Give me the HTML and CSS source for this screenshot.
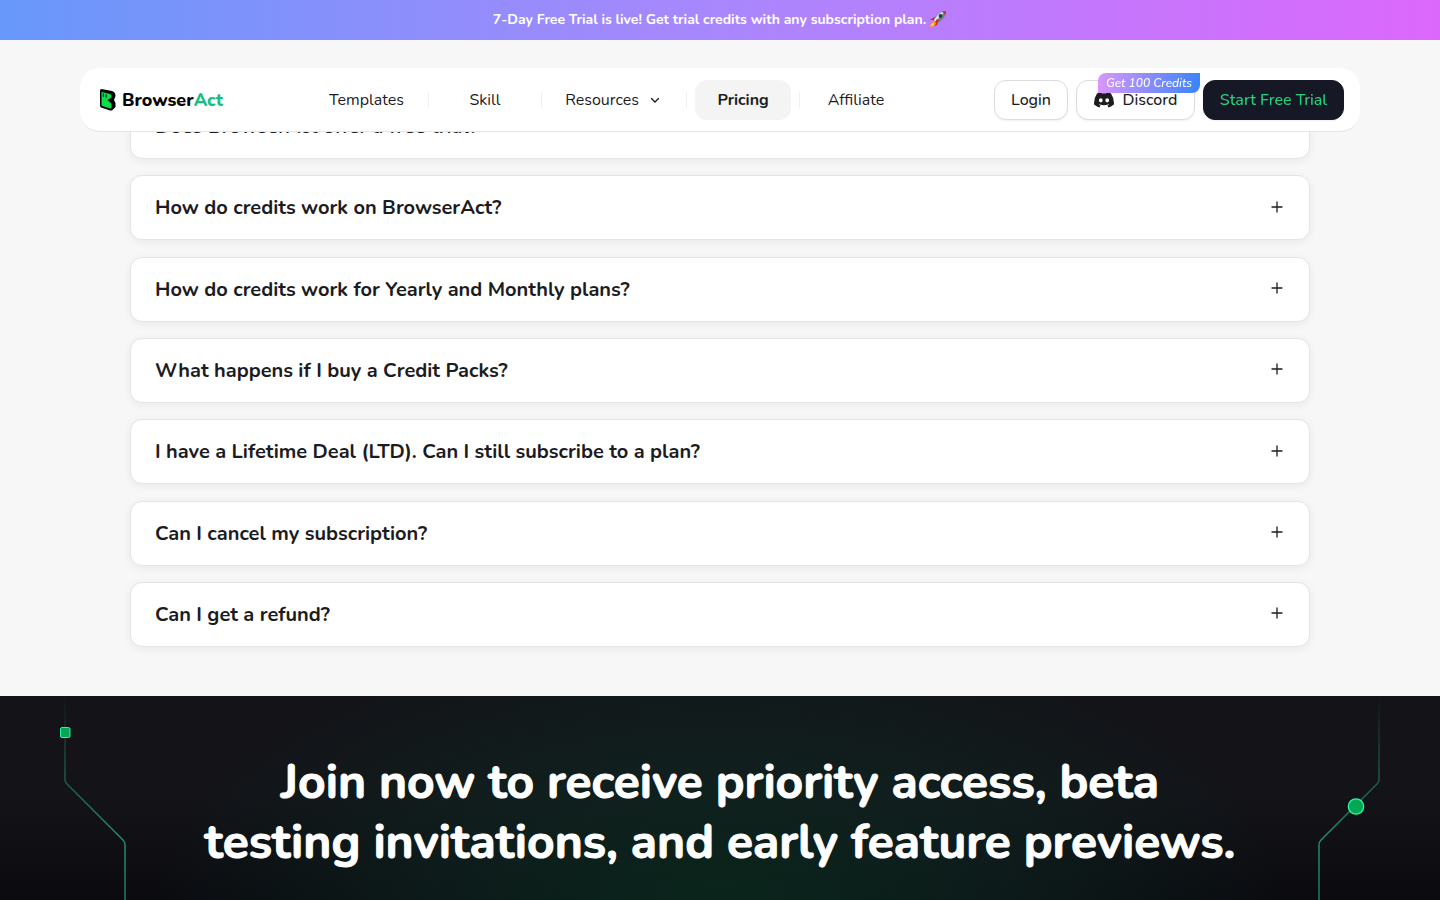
FILE: index.html
```html
<!DOCTYPE html>
<html lang="en">
<head>
<meta charset="utf-8">
<title>BrowserAct Pricing</title>
<link rel="stylesheet" href="styles.css">
</head>
<body>
<a class="banner" href="#trial"><span>7-Day Free Trial is live! Get trial credits with any subscription plan.</span>
<svg class="rocket" viewBox="0 0 18 18" aria-hidden="true"><path d="M4 8 8 6 10 10 8 15 6 16 7 12 4 10 1 10Z" fill="#c9252d"/><path d="M4.500 10.500C7 5 11 1 17 1C17 7 12 12 7.500 13.500Z" fill="#6f8490"/><path d="M5 10C8 5 11 2 16 1.500L6 12Z" fill="#d9e3e8"/><path d="M13 1.500Q15 1 17 1Q17 3 16.500 5Z" fill="#d62631"/><circle cx="11.500" cy="6" r="1.900" fill="#253b50"/><path d="M8 9 10 10 7 15 6 12Z" fill="#d62631"/><path d="M5 11 7 13Q5 17 1 17Q1 13 5 11Z" fill="#ff9d19"/><path d="M4 13 5 14Q4 16 2 16Q2 14 4 13Z" fill="#ffe455"/></svg></a>
<header class="header">
  <a class="logo" href="#home" aria-label="BrowserAct">
    <svg class="logo-mark" viewBox="0 0 16 22" aria-hidden="true"><path d="M1.500 0 12 2Q15.500 3 15.500 7L14 11 15.500 14V18L12 21.500 10 21.500 1 18.500Q0 18 0 16.500V1.500Q0 0 1.500 0Z" fill="#050505"/><path d="M1.500 3 9.500 4.700Q11.500 5.200 11.500 7V8.500L7.500 11 11.500 14.500V18Q11.500 20 10 19.500L2.500 17Q1.500 16.500 1.500 15.500Z" fill="#0bdc4b"/><path d="M3.400 5v2.500M6.100 5.700v2.500" stroke="#050505" stroke-width="1"/></svg>
    <span class="wordmark">Browser<span class="accent">Act</span></span>
  </a>
  <nav class="nav" aria-label="Main">
    <a class="templates" href="#templates">Templates</a>
    <a class="skill" href="#skill">Skill</a>
    <button class="resources" type="button">Resources <svg viewBox="0 0 16 16" aria-hidden="true"><path d="m4.500 6.500 3.500 3.500 3.500-3.500"/></svg></button>
    <a class="pricing" href="#pricing" aria-current="page"><span>Pricing</span></a>
    <a class="affiliate" href="#affiliate">Affiliate</a>
  </nav>
  <div class="actions">
    <button class="btn login" type="button">Login</button>
    <button class="btn discord" type="button"><svg viewBox="0 0 20 16" aria-hidden="true"><path fill="#1c1c1f" fill-rule="evenodd" d="M7.300 0Q5 .4 3 1.400Q-.4 6.500.1 12.600Q2.500 14.600 5.400 15.500L6.600 13.500 5 12.700 5.400 12.300Q10 14.200 14.600 12.300L15 12.700 13.400 13.500 14.600 15.500Q17.500 14.600 19.900 12.600Q20.400 6.500 17 1.400Q15 .4 12.700 0L12 1.400Q10 1.100 8 1.400ZM6.800 6.200A1.900 2.100 0 1 1 6.800 10.400A1.900 2.100 0 1 1 6.800 6.200ZM13.200 6.200A1.900 2.100 0 1 1 13.200 10.400A1.900 2.100 0 1 1 13.200 6.200Z"/></svg>Discord<span class="badge">Get 100 Credits</span></button>
    <button class="btn trial" type="button">Start Free Trial</button>
  </div>
</header>
<main>
  <section class="faq" aria-label="Frequently asked questions">
    <button class="question" type="button">Does BrowserAct offer a free trial?<svg viewBox="0 0 12 12" aria-hidden="true"><path d="M6 1v10M1 6h10"/></svg></button>
    <button class="question" type="button">How do credits work on BrowserAct?<svg viewBox="0 0 12 12" aria-hidden="true"><path d="M6 1v10M1 6h10"/></svg></button>
    <button class="question" type="button">How do credits work for Yearly and Monthly plans?<svg viewBox="0 0 12 12" aria-hidden="true"><path d="M6 1v10M1 6h10"/></svg></button>
    <button class="question" type="button">What happens if I buy a Credit Packs?<svg viewBox="0 0 12 12" aria-hidden="true"><path d="M6 1v10M1 6h10"/></svg></button>
    <button class="question" type="button">I have a Lifetime Deal (LTD). Can I still subscribe to a plan?<svg viewBox="0 0 12 12" aria-hidden="true"><path d="M6 1v10M1 6h10"/></svg></button>
    <button class="question" type="button">Can I cancel my subscription?<svg viewBox="0 0 12 12" aria-hidden="true"><path d="M6 1v10M1 6h10"/></svg></button>
    <button class="question" type="button">Can I get a refund?<svg viewBox="0 0 12 12" aria-hidden="true"><path d="M6 1v10M1 6h10"/></svg></button>
  </section>
  <section class="join">
    <svg class="circuit left" viewBox="0 0 70 204" aria-hidden="true"><defs><linearGradient id="fade" gradientUnits="userSpaceOnUse" x1="0" y1="0" x2="0" y2="204"><stop offset="0" stop-color="#25b987" stop-opacity="0"/><stop offset=".7" stop-color="#25b987" stop-opacity=".75"/><stop offset="1" stop-color="#25b987" stop-opacity=".65"/></linearGradient></defs><path d="M5 0V84Q5 86 7 88L63 144Q65 146 65 149V204" fill="none" stroke="url(#fade)" stroke-width="1.500"/><rect x=".5" y="31.500" width="9.500" height="10" rx="1.500" fill="#05a755" stroke="#2ff3aa"/></svg>
    <h2>Join now to receive priority access, beta<br>testing invitations, and early feature previews.</h2>
    <svg class="circuit right" viewBox="0 0 70 204" aria-hidden="true"><path d="M69 0V84Q69 86 67 88L11 144Q9 146 9 149V204" fill="none" stroke="url(#fade)" stroke-width="1.500"/><circle cx="46" cy="110.500" r="7.700" fill="#05a755" stroke="#2ff3aa" stroke-width="1.300"/></svg>
  </section>
</main>
</body>
</html>
```
FILE: styles.css
```css
* { box-sizing: border-box; }
body {
  margin: 0;
  min-height: 100vh;
  display: flex;
  flex-direction: column;
  background: #f7f7f7;
  color: #1c1c1f;
  font-family: Nunito, Lato, "Noto Sans", sans-serif;
  font-size: 16px;
}
a { color: inherit; text-decoration: none; }
button { font: inherit; color: inherit; cursor: pointer; }
.banner {
  display: flex;
  align-items: center;
  justify-content: center;
  gap: 3px;
  height: 40px;
  padding-bottom: 2px;
  background: linear-gradient(90deg, #6898fa, #a987fd 50%, #dc68fb);
  color: #fff;
  font-size: 14px;
  font-weight: 700;
}
.rocket { width: 18px; height: 18px; }
.header {
  position: fixed;
  z-index: 2;
  top: 68px;
  left: 80px;
  right: 80px;
  height: 64px;
  padding: 0 16px 0 20px;
  display: flex;
  align-items: center;
  justify-content: space-between;
  background: #fff;
  border-bottom: 1px solid #e6e6e6;
  border-radius: 20px;
}
.logo { display: flex; align-items: center; gap: 6px; }
.logo-mark { width: 16px; height: 22px; }
.wordmark { font-size: 18px; font-weight: 800; color: #050505; }
.accent { color: #17bf83; }
.nav { display: flex; align-items: center; height: 40px; }
.nav > * {
  display: flex;
  align-items: center;
  justify-content: center;
  height: 16px;
  padding: 0;
  background: none;
  border: 0;
  border-right: 1px solid #f0f0f0;
}
.nav .templates { width: 124px; }
.nav .skill { width: 113px; }
.nav .resources { width: 145px; gap: 8px; }
.nav .resources svg { width: 16px; height: 16px; }
.nav .pricing { width: 113px; font-weight: 700; }
.nav .pricing span {
  padding: 0 22px;
  line-height: 40px;
  background: #f4f4f4;
  border-radius: 12px;
}
.nav .affiliate { width: 112px; border: 0; }
svg path { stroke-linecap: round; }
.resources path, .question path { fill: none; stroke: #1c1c1f; stroke-width: 1.3; }
.actions { display: flex; gap: 8px; }
.btn {
  position: relative;
  display: flex;
  align-items: center;
  justify-content: center;
  gap: 9px;
  height: 40px;
  padding: 0;
  background: #fff;
  border: 1px solid #dcdcdc;
  border-radius: 12px;
  box-shadow: 0 1px 2px rgba(0, 0, 0, .06);
  font-weight: 500;
}
.login { width: 74px; }
.discord { width: 119px; }
.discord svg { width: 20px; height: 16px; }
.trial { width: 141px; background: #171826; border-color: #171826; color: #25d27c; }
.badge {
  position: absolute;
  top: -8px;
  right: -6px;
  width: 102px;
  line-height: 20px;
  border-radius: 8px 0;
  background: linear-gradient(90deg, #d996fc, #3984fb);
  color: #fff;
  font-size: 12px;
  font-style: italic;
}
main { flex: 1; display: flex; flex-direction: column; }
.faq {
  width: 100%;
  max-width: 1180px;
  min-height: 656px;
  margin: 0 auto;
  padding: 54px 0 49px;
  display: flex;
  flex-direction: column;
  justify-content: space-between;
}
.question {
  display: flex;
  align-items: center;
  justify-content: space-between;
  height: 65px;
  padding: 0 26px 0 24px;
  background: #fff;
  border: 1px solid #e4e4e4;
  border-radius: 12px;
  box-shadow: 0 2px 8px rgba(0, 0, 0, .06);
  font-size: 20px;
  font-weight: 700;
  text-align: left;
}
.question svg { width: 12px; height: 12px; margin-bottom: 2px; }
.join {
  flex: 1;
  display: flex;
  align-items: flex-start;
  justify-content: space-between;
  padding: 0 60px;
  background:
    radial-gradient(ellipse 580px 290px at 50% 105%, rgba(10, 44, 31, .8), rgba(14, 42, 35, .5) 50%, transparent),
    linear-gradient(#131318 50%, #0a0a0f);
}
.circuit { flex: none; width: 70px; height: 204px; }
.join h2 {
  margin: 0;
  padding-top: 56px;
  color: #fff;
  font-size: 48px;
  line-height: 60px;
  font-weight: 700;
  -webkit-text-stroke: 1px currentColor;
  text-align: center;
  white-space: nowrap;
}
```
